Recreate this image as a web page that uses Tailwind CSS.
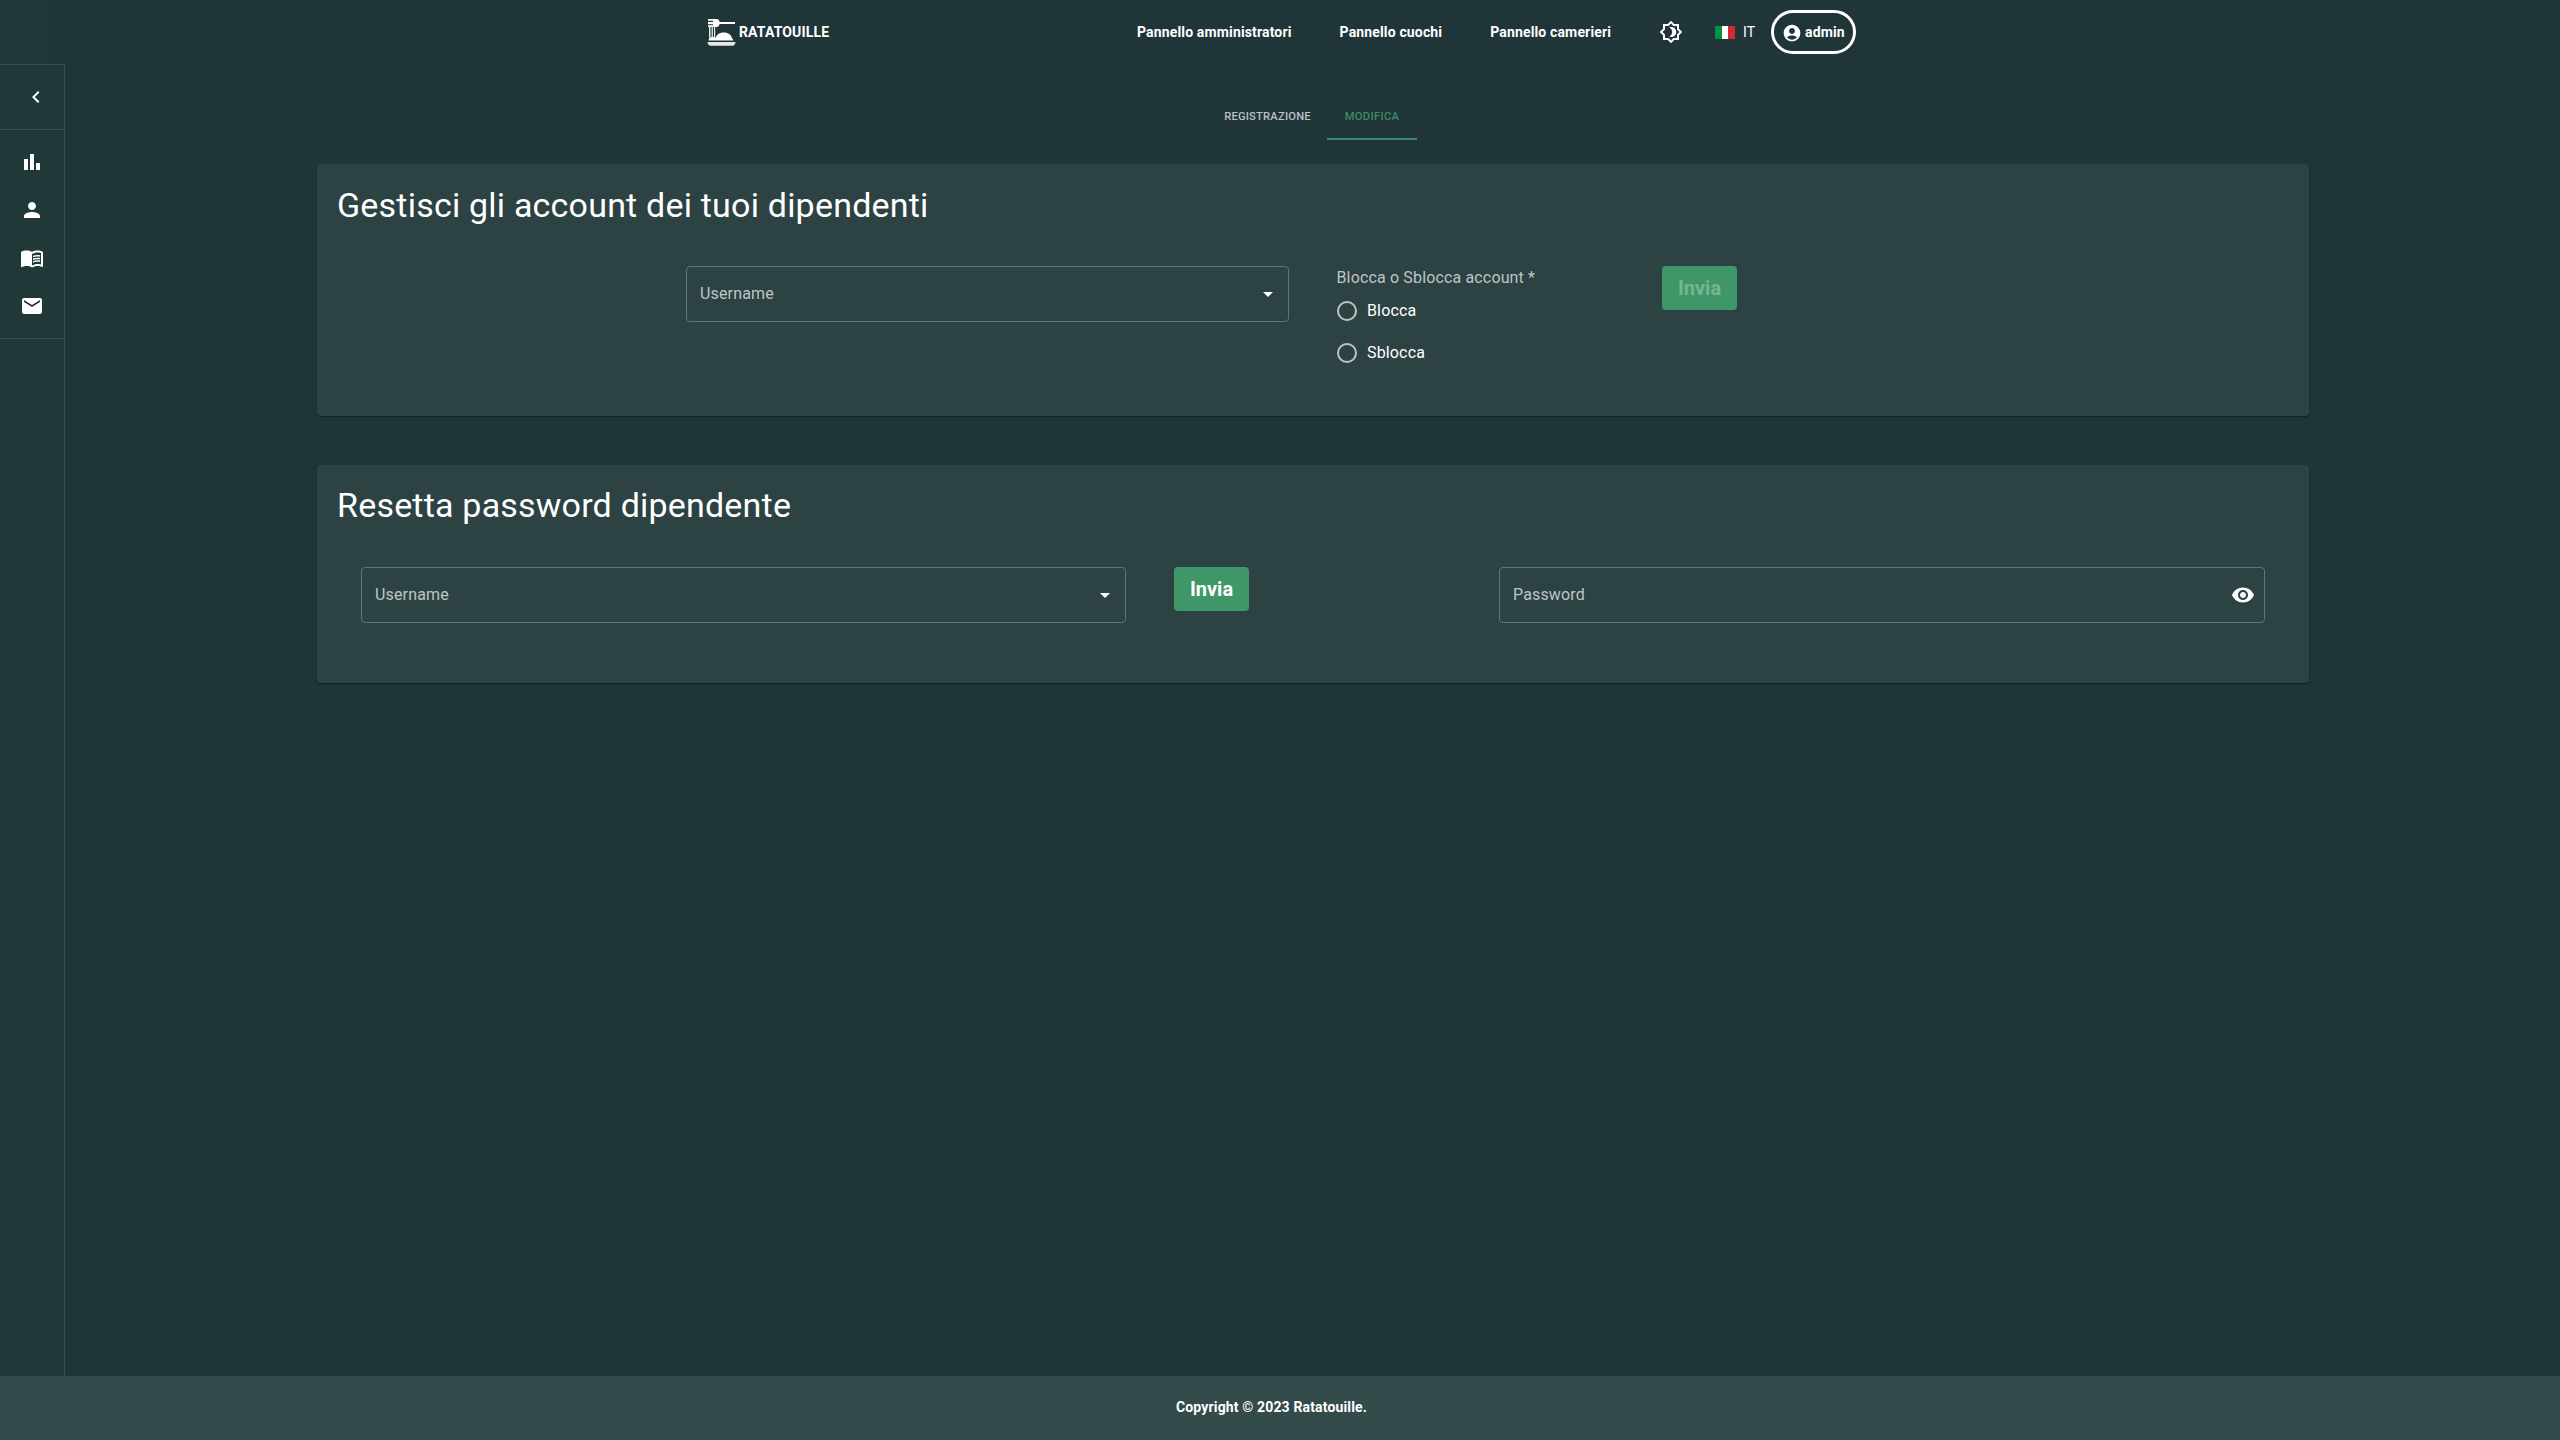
<!DOCTYPE html>
<html lang="it">
<head>
<meta charset="utf-8">
<title>Ratatouille</title>
<script src="https://cdn.jsdelivr.net/npm/@tailwindcss/browser@4"></script>
</head>
<body class="h-[1440px] w-[2560px] overflow-hidden bg-[#1f3537] font-['Roboto',sans-serif] text-white flex flex-col">
<header class="h-16 shrink-0 flex items-center pl-[707px] text-sm font-bold tracking-[0.01071em] bg-linear-to-r from-[#203938] to-[#1f3537] to-[110px]">
  <a class="flex items-center w-[430px]">
    <svg class="w-[29px] h-[28px] mr-[3px]" viewBox="0 0 29 28" fill="#fff">
      <path d="M1 1h8.500c1.700 0 2.800 1.300 3.100 3.100H28v1.800H12.600C12.300 7.700 11.200 9 9.500 9H1V7.300h5V6.200H1V3.900h5V2.800H1z"/>
      <path d="M2 8h1.500v12H2zM4.600 8h1.300v12H4.600zM7 8h1.200v12H7z" fill="#e4e9e9"/>
      <path d="M1.500 22.500c0-3 3.500-4.500 7.500-3 1.500-6.700 14-6.700 16 .5l1.500 2.500z"/>
      <path d="M.5 24h28c0 2-1.500 3.700-3 3.700h-22C2 27.700.5 26 .5 24z" fill="#e4e9e9"/>
    </svg>
    <span>RATATOUILLE</span>
  </a>
  <nav class="flex w-[522px] gap-12"><a>Pannello amministratori</a><a>Pannello cuochi</a><a>Pannello camerieri</a></nav>
  <svg class="size-6 mr-8" viewBox="0 0 24 24" fill="#fff"><path d="M20 8.690V4h-4.690L12 .69 8.690 4H4v4.690L.69 12 4 15.310V20h4.690L12 23.310 15.310 20H20v-4.690L23.310 12 20 8.690zm-2 5.790V18h-3.520L12 20.480 9.520 18H6v-3.520L3.520 12 6 9.520V6h3.520L12 3.520 14.480 6H18v3.520L20.480 12 18 14.480z"/><path d="M12.290 7c-.74 0-1.450.17-2.080.46 1.720.79 2.920 2.530 2.920 4.540s-1.200 3.750-2.920 4.540c.63.29 1.340.46 2.080.46 2.760 0 5-2.240 5-5s-2.240-5-5-5z"/></svg>
  <div class="flex h-[13px] w-5 mt-px mr-2"><i class="flex-1 bg-[#009246]"></i><i class="flex-1 bg-white"></i><i class="flex-1 bg-[#ce2b37]"></i></div>
  <span class="font-normal w-7">IT</span>
  <div class="flex items-center h-11 w-[85px] border-[3px] border-white rounded-[22px] pl-2 gap-[3px]">
    <svg class="size-5 mt-px" viewBox="0 0 24 24" fill="#fff"><path d="M12 2C6.480 2 2 6.480 2 12s4.480 10 10 10 10-4.480 10-10S17.520 2 12 2zm0 4c1.930 0 3.500 1.570 3.500 3.500S13.930 13 12 13s-3.500-1.570-3.500-3.500S10.070 6 12 6zm0 14c-2.030 0-4.430-.82-6.140-2.880C7.550 15.800 9.680 15 12 15s4.450.8 6.140 2.120C16.430 19.180 14.030 20 12 20z"/></svg>
    <span>admin</span>
  </div>
</header>
<div class="flex flex-1">
  <aside class="w-[65px] border-r border-t border-[#3a4f50] bg-[#213838]">
    <div class="h-[65px] border-b border-[#3a4f50] flex items-center pl-6">
      <svg class="size-6" viewBox="0 0 24 24" fill="#fff"><path d="M15.410 7.410 14 6l-6 6 6 6 1.410-1.410L10.830 12z"/></svg>
    </div>
    <div class="h-[209px] border-b border-[#3a4f50] flex flex-col gap-6 items-center pt-5">
      <svg class="size-6" viewBox="0 0 24 24" fill="#fff"><path d="M4 9h4v11H4zm12 4h4v7h-4zm-6-9h4v16h-4z"/></svg>
      <svg class="size-6" viewBox="0 0 24 24" fill="#fff"><path d="M12 12c2.210 0 4-1.790 4-4s-1.790-4-4-4-4 1.790-4 4 1.790 4 4 4zm0 2c-2.670 0-8 1.340-8 4v2h16v-2c0-2.660-5.330-4-8-4z"/></svg>
      <svg class="size-6" viewBox="0 0 24 24" fill="#fff"><path d="M21 5c-1.110-.35-2.330-.5-3.500-.5-1.950 0-4.050.4-5.500 1.500-1.450-1.100-3.550-1.500-5.500-1.500S2.450 4.900 1 6v14.650c0 .25.25.5.5.5.1 0 .15-.05.25-.05C3.100 20.450 5.050 20 6.500 20c1.950 0 4.050.4 5.500 1.500 1.350-.85 3.800-1.500 5.500-1.500 1.650 0 3.350.3 4.750 1.050.1.05.15.05.25.05.25 0 .5-.25.5-.5V6c-.6-.45-1.250-.75-2-1zm0 13.500c-1.100-.35-2.300-.5-3.500-.5-1.700 0-4.150.65-5.500 1.500V8c1.350-.85 3.800-1.500 5.500-1.500 1.200 0 2.400.15 3.500.5v11.500z"/><path d="M17.500 10.500c.88 0 1.730.09 2.500.26V9.240c-.79-.15-1.640-.24-2.500-.24-1.700 0-3.240.29-4.500.83v1.660c1.130-.64 2.700-.99 4.500-.99zM13 12.490v1.660c1.130-.64 2.700-.99 4.500-.99.88 0 1.730.09 2.500.26V11.900c-.79-.15-1.640-.24-2.500-.24-1.700 0-3.240.3-4.500.83zm4.500 1.840c-1.700 0-3.240.29-4.500.83v1.660c1.130-.64 2.700-.99 4.500-.99.88 0 1.730.09 2.500.26v-1.520c-.79-.16-1.640-.24-2.500-.24z"/></svg>
      <svg class="size-6" viewBox="0 0 24 24" fill="#fff"><path d="M20 4H4c-1.100 0-1.990.9-1.990 2L2 18c0 1.100.9 2 2 2h16c1.100 0 2-.9 2-2V6c0-1.100-.9-2-2-2zm0 4-8 5-8-5V6l8 5 8-5v2z"/></svg>
    </div>
  </aside>
  <main class="flex-1 pl-[252px] pt-7">
    <div class="flex h-12 ml-[891px] text-[11.200px] font-medium leading-[14px]">
      <div class="w-[119px] flex items-center justify-center pt-0.5 tracking-[0.018em] text-[#bcc2c3]">REGISTRAZIONE</div>
      <div class="w-[90px] flex items-center justify-center text-[#3b8a63] border-b-2 border-[#3b8a63] pt-1 tracking-[0.02857em]">MODIFICA</div>
    </div>
    <section class="mt-6 w-[1992px] h-[252px] rounded bg-[#2c4243] shadow-[0_2px_1px_-1px_rgba(0,0,0,.2),0_1px_1px_rgba(0,0,0,.14),0_1px_3px_rgba(0,0,0,.12)] pt-5">
      <h1 class="pl-5 text-[34px] leading-[42px] tracking-[0.006em]">Gestisci gli account dei tuoi dipendenti</h1>
      <div class="flex items-start mt-10 pl-[369px]">
        <div class="w-[603px] h-14 rounded border border-[#637474] flex items-center justify-between pl-[13px] pr-2">
          <span class="tracking-[0.00938em] text-[#bfc5c5]">Username</span>
          <svg class="size-6" viewBox="0 0 24 24" fill="#fff"><path d="m7 10 5 5 5-5z"/></svg>
        </div>
        <div class="ml-12 w-[325px] tracking-[0.00938em]">
          <div class="leading-[23px] text-[#bfc5c5] mb-px -indent-[0.5px]">Blocca o Sblocca account *</div>
          <div class="h-[42px] flex items-center gap-2.5"><i class="size-5 rounded-full border-2 border-[#bfc5c5]"></i>Blocca</div>
          <div class="h-[42px] flex items-center gap-2.5"><i class="size-5 rounded-full border-2 border-[#bfc5c5]"></i>Sblocca</div>
        </div>
        <button class="w-[75px] h-11 rounded bg-[#3f9768] text-white/30 text-xl font-bold">Invia</button>
      </div>
    </section>
    <section class="mt-[49px] w-[1992px] h-[218px] rounded bg-[#2c4243] shadow-[0_2px_1px_-1px_rgba(0,0,0,.2),0_1px_1px_rgba(0,0,0,.14),0_1px_3px_rgba(0,0,0,.12)] pt-[19px]">
      <h1 class="pl-5 text-[34px] leading-[42px] tracking-[0.006em]">Resetta password dipendente</h1>
      <div class="flex items-start mt-[41px] pl-11">
        <div class="w-[765px] h-14 rounded border border-[#637474] flex items-center justify-between pl-[13px] pr-2">
          <span class="tracking-[0.00938em] text-[#bfc5c5]">Username</span>
          <svg class="size-6" viewBox="0 0 24 24" fill="#fff"><path d="m7 10 5 5 5-5z"/></svg>
        </div>
        <button class="ml-12 mr-[250px] w-[75px] h-11 rounded bg-[#3f9768] text-white text-xl font-bold">Invia</button>
        <div class="w-[766px] h-14 rounded border border-[#637474] flex items-center justify-between pl-[13px] pr-[9px]">
          <span class="tracking-[0.00938em] text-[#bfc5c5]">Password</span>
          <svg class="size-6" viewBox="0 0 24 24" fill="#fff"><path d="M12 4.500C7 4.500 2.730 7.610 1 12c1.730 4.390 6 7.500 11 7.500s9.270-3.110 11-7.500c-1.730-4.390-6-7.500-11-7.500zM12 17c-2.760 0-5-2.240-5-5s2.240-5 5-5 5 2.240 5 5-2.240 5-5 5zm0-8c-1.660 0-3 1.340-3 3s1.340 3 3 3 3-1.340 3-3-1.340-3-3-3z"/></svg>
        </div>
      </div>
    </section>
  </main>
</div>
<footer class="h-16 shrink-0 bg-[#344b4b] pl-[1176px] pb-0.5 flex items-center text-sm font-bold tracking-[0.01071em]">Copyright © 2023 Ratatouille.</footer>
</body>
</html>
